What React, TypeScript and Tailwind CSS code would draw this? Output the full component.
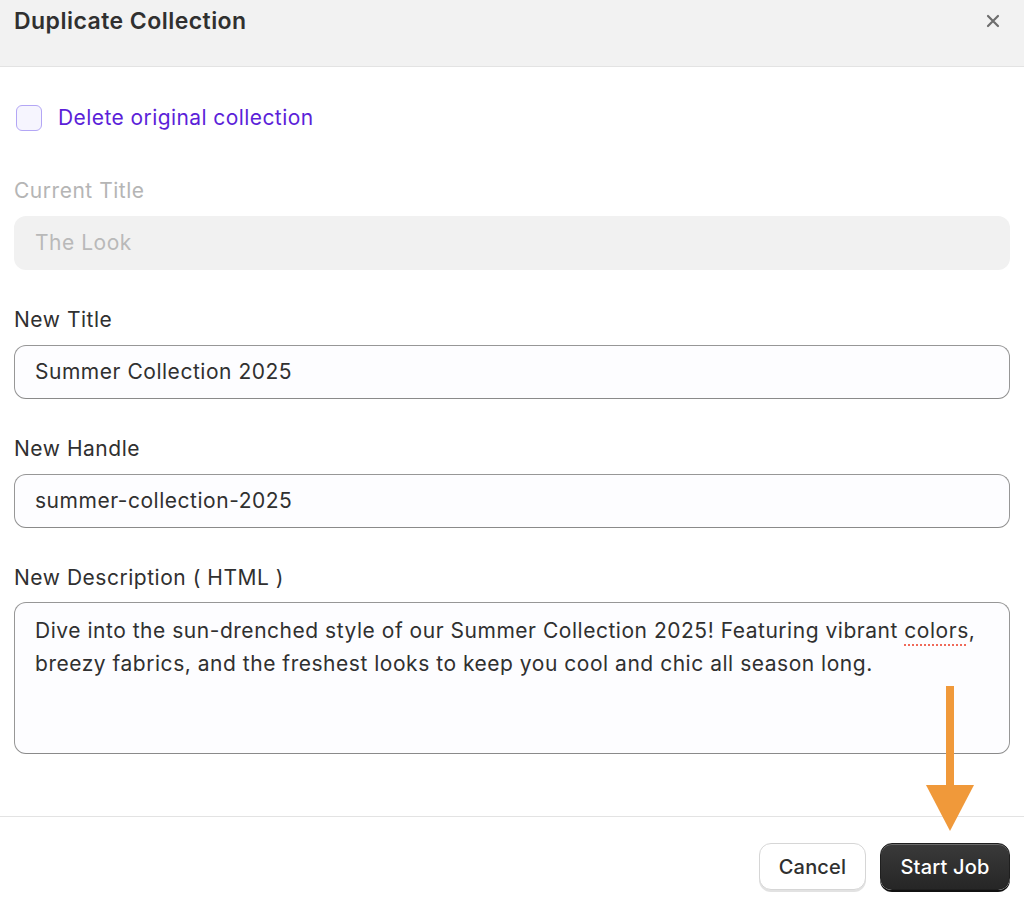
import React from "react";

const font = { fontFamily: "Inter, 'Noto Sans', sans-serif" };

function Field({
  label,
  value,
  muted,
}: {
  label: string;
  value: string;
  muted?: boolean;
}) {
  return (
    <div className="flex flex-col gap-[12px]">
      <label
        className={`text-[21px] leading-[26px] tracking-[0.025em] ${muted ? "text-[#b5b5b5]" : "text-[#303030]"}`}
      >
        {label}
      </label>
      {muted ? (
        <div className="flex h-[54px] items-center rounded-[12px] bg-[#f1f1f1] px-[21px] text-[21px] tracking-[0.025em] text-[#b9b9b9]">
          {value}
        </div>
      ) : (
        <div className="flex h-[54px] items-center rounded-[12px] border border-[#979797] border-b-[#8a8a8a] bg-[#fdfdff] px-[20px] text-[21px] tracking-[0.025em] text-[#303030]">
          {value}
        </div>
      )}
    </div>
  );
}

export default function App() {
  return (
    <div className="relative h-[905px] w-[1024px] overflow-hidden bg-white" style={font}>
      <header className="flex h-[67px] items-start justify-between border-b border-[#e3e3e3] bg-[#f2f2f2] px-[14px] pt-[7px]">
        <h1 className="text-[23px] font-semibold leading-[28px] tracking-[0.02em] text-[#303030]">
          Duplicate Collection
        </h1>
        <button className="mr-[10px] mt-[7px] text-[#6e6e6e]">
          <svg width="14" height="14" viewBox="0 0 14 14" fill="none">
            <path d="M2 2l10 10M12 2L2 12" stroke="currentColor" strokeWidth="2.2" strokeLinecap="round" />
          </svg>
        </button>
      </header>

      <main className="px-[14px] pt-[38px]">
        <div className="flex items-center gap-[16px] pl-[2px]">
          <span className="h-[26px] w-[26px] rounded-[6px] border-[1.5px] border-[#b3a6f5] bg-[#f6f5fe]" />
          <span className="text-[21px] leading-[26px] tracking-[0.02em] text-[#5c1fd9]">
            Delete original collection
          </span>
        </div>

        <div className="mt-[47px] flex flex-col gap-[37px]">
          <Field label="Current Title" value="The Look" muted />
          <Field label="New Title" value="Summer Collection 2025" />
          <Field label="New Handle" value="summer-collection-2025" />
          <div className="flex flex-col gap-[11px]">
            <label className="text-[21px] leading-[26px] tracking-[0.025em] text-[#303030]">
              New Description ( HTML )
            </label>
            <div className="h-[152px] rounded-[12px] border border-[#979797] border-b-[#8a8a8a] bg-[#fdfdff] px-[20px] pt-[11px] text-[21px] leading-[33px] tracking-[0.025em] text-[#303030]">
              Dive into the sun-drenched style of our Summer Collection 2025! Featuring vibrant{" "}
              <span className="underline decoration-dotted decoration-[#ef6a5a] decoration-2 underline-offset-[6px]">
                colors
              </span>
              ,
              <br />
              breezy fabrics, and the freshest looks to keep you cool and chic all season long.
            </div>
          </div>
        </div>
      </main>

      <footer className="mt-[62px] flex justify-end gap-[14px] border-t border-[#e3e3e3] px-[14px] pt-[26px]">
        <button className="h-[47px] w-[107px] rounded-[12px] border border-[#d6d6d6] bg-white text-[20px] font-medium tracking-[0.01em] text-[#303030] shadow-[0_2px_0_#e2e2e2]">
          Cancel
        </button>
        <button className="h-[47px] w-[130px] rounded-[12px] border border-[#1f1f1f] bg-gradient-to-b from-[#3a3a3a] to-[#262626] text-[20px] font-medium tracking-[0.01em] text-white shadow-[inset_0_1px_0_rgba(255,255,255,0.25),0_2px_0_#111]">
          Start Job
        </button>
      </footer>

      <svg
        className="absolute left-[926px] top-[686px]"
        width="48"
        height="145"
        viewBox="0 0 48 145"
      >
        <rect x="20" y="0" width="8" height="101" fill="#f0993a" />
        <polygon points="0,99 48,99 24,145" fill="#f0993a" />
      </svg>
    </div>
  );
}
